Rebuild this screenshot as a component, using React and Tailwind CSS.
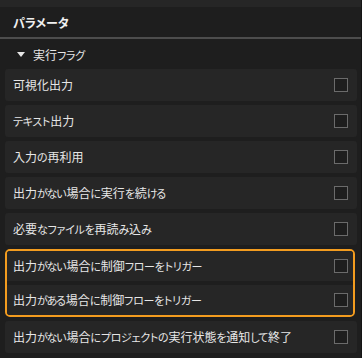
import React from "react";

const font = { fontFamily: '"Noto Sans CJK JP", "Noto Sans", sans-serif' };

function Jp({ text }) {
  const parts = text.split(/([\u3040-\u309f]+|[\u30a0-\u30ff]+)/).filter(Boolean);
  return (
    <span className="text-[12px] text-[#e6e6e6] leading-none whitespace-nowrap">
      {parts.map((p, i) => {
        if (/[\u3040-\u309f]/.test(p))
          return <span key={i} className="text-[11px] tracking-[-1.2px] mr-[1px]">{p}</span>;
        if (/[\u30a0-\u30ff]/.test(p))
          return <span key={i} className="text-[11px] tracking-[-0.3px]">{p}</span>;
        return <span key={i}>{p}</span>;
      })}
    </span>
  );
}

function Check() {
  return <div className="w-[14px] h-[14px] border border-[#6b6b6b] bg-[#1e1e1e] shrink-0" />;
}

function Row({ label }) {
  return (
    <div className="h-[32px] rounded-[3px] bg-[#262626] flex items-center justify-between pl-[8px] pr-[9px]">
      <Jp text={label} />
      <Check />
    </div>
  );
}

function InnerRow({ label }) {
  return (
    <div className="h-[30px] bg-[#262626] flex items-center justify-between pl-[6px] pr-[5px]">
      <Jp text={label} />
      <Check />
    </div>
  );
}

export default function App() {
  return (
    <div className="w-[362px] h-[358px] bg-[#1e1e1e] flex overflow-hidden [font-feature-settings:'palt']" style={font}>
      <div className="w-[361px] flex flex-col">
        <div className="h-[7px] bg-[#262626]" />
        <div className="h-[30px] flex items-center pl-[13px] pt-[2px]">
          <span className="text-[12px] font-bold text-[#f0f0f0] leading-none">パラメータ</span>
        </div>
        <div className="h-[2px] bg-[#4d4d4d]" />
        <div className="h-[30px] flex items-center pl-[17px] gap-[8px] pt-[1px]">
          <svg width="8" height="5" viewBox="0 0 8 5">
            <path d="M0 0 L8 0 L4 5 Z" fill="#e6e6e6" />
          </svg>
          <Jp text="実行フラグ" />
        </div>
        <div className="flex flex-col gap-[4px] pl-[5px] pr-[4px]">
          <Row label="可視化出力" />
          <Row label="テキスト出力" />
          <Row label="入力の再利用" />
          <Row label="出力がない場合に実行を続ける" />
          <Row label="必要なファイルを再読み込み" />
          <div className="h-[68px] mr-[2px] border-2 border-[#f39c1f] rounded-[5px] bg-[#1e1e1e] flex flex-col gap-[4px] overflow-hidden">
            <InnerRow label="出力がない場合に制御フローをトリガー" />
            <InnerRow label="出力がある場合に制御フローをトリガー" />
          </div>
          <Row label="出力がない場合にプロジェクトの実行状態を通知して終了" />
        </div>
      </div>
      <div className="w-[1px] bg-[#141414]" />
    </div>
  );
}
